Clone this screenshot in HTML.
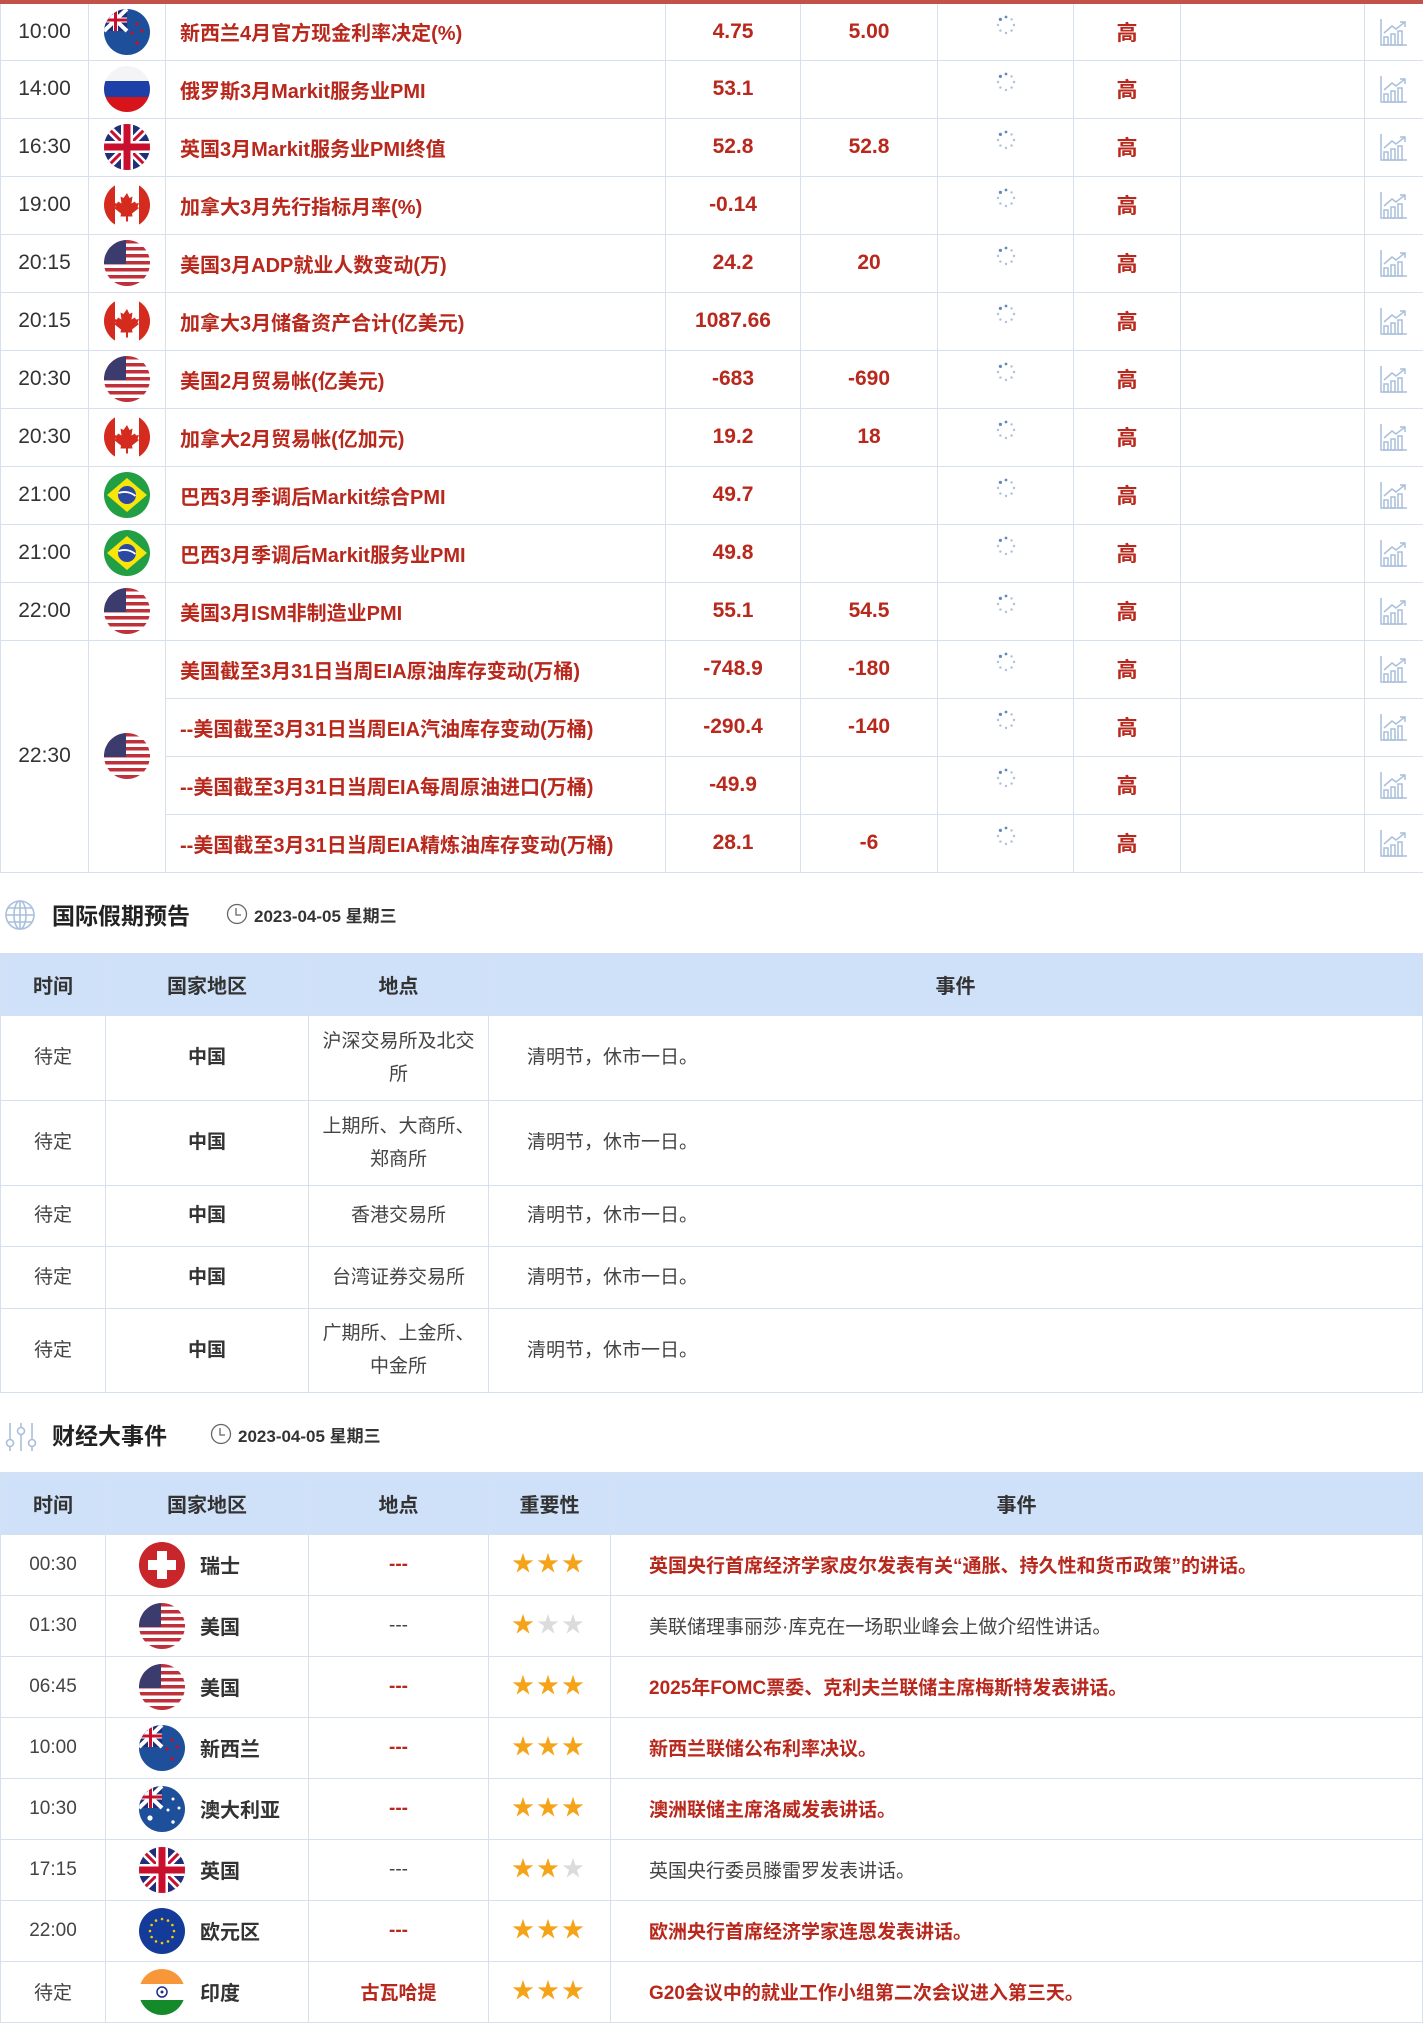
<!DOCTYPE html>
<html><head><meta charset="utf-8">
<style>
*{margin:0;padding:0;box-sizing:border-box}
body{width:1423px;height:2013px;overflow:hidden;background:#fff;font-family:"Liberation Sans","Noto Sans CJK SC",sans-serif;color:#333}
table{border-collapse:collapse;table-layout:fixed;width:1423px}
td,th{border:1px solid #d7e0ee;text-align:center;vertical-align:middle}
#t1{border-top:4px solid #c0524a}
#t1 td{height:58px;font-size:20px}
#t1 td.tm{color:#333;font-size:21px}
#t1 td.ev{text-align:left;padding-left:14px;color:#b8281c;font-weight:bold;font-size:20px}
#t1 td.v{color:#b8281c;font-weight:bold;font-size:21px}
#t1 td.g{color:#b8281c;font-size:21px;font-weight:bold}
.fw{width:46px;height:46px;border-radius:50%;overflow:hidden;display:block;margin:0 auto}
.fw svg{width:46px;height:46px;display:block}
.sec{height:80px;position:relative}
.sec .ti{position:absolute;left:52px;top:24px;font-size:23px;font-weight:bold;color:#222}
.sec .dt{position:absolute;top:29px;font-size:17px;font-weight:bold;color:#333}
th{background:#cfe1f9;font-size:20px;font-weight:bold;color:#333;height:62px}
#t2 td{font-size:19px;color:#444;line-height:33px}
#t2 td.cn{font-weight:bold;color:#333}
#t3 td{height:61px;font-size:19px;color:#444}
#t3 td.red{color:#b8281c;font-weight:bold}
.ctry{display:flex;align-items:center;padding-left:33px}
.ctry .fw{margin:0 15px 0 0}
.ctry b{font-size:20px;color:#333}
#t3 td.st{color:#f5a318;font-size:22px;letter-spacing:3px;padding-bottom:6px}
.st i{color:#dcdcdc;font-style:normal}
.sp{width:20px;height:20px;display:block;margin:-14px auto 0}
</style></head><body>
<svg width="0" height="0" style="position:absolute">
<defs>
<symbol id="us" viewBox="0 0 46 46"><rect width="46" height="46" fill="#fff"/><g fill="#c0303a"><rect y="0" width="46" height="3.5"/><rect y="7" width="46" height="3.5"/><rect y="14" width="46" height="3.5"/><rect y="21" width="46" height="3.5"/><rect y="28" width="46" height="3.5"/><rect y="35" width="46" height="3.5"/><rect y="42" width="46" height="4"/></g><rect width="22" height="24" fill="#3c3b6e"/></symbol>
<symbol id="uk" viewBox="0 0 46 46"><rect width="46" height="46" fill="#1f2f7a"/><path d="M0 0L46 46M46 0L0 46" stroke="#fff" stroke-width="8"/><path d="M0 0L46 46M46 0L0 46" stroke="#c8102e" stroke-width="3"/><path d="M23 0V46M0 23H46" stroke="#fff" stroke-width="12"/><path d="M23 0V46M0 23H46" stroke="#c8102e" stroke-width="7"/></symbol>
<symbol id="nz" viewBox="0 0 46 46"><rect width="46" height="46" fill="#1d4f9a"/><rect width="23" height="22" fill="#1f2f7a"/><path d="M0 0L23 22M23 0L0 22" stroke="#fff" stroke-width="4"/><path d="M11.5 0V22M0 11H23" stroke="#fff" stroke-width="5"/><path d="M11.5 0V22M0 11H23" stroke="#c8102e" stroke-width="3"/><g fill="#c8102e"><circle cx="33" cy="15" r="1.6"/><circle cx="38" cy="22" r="1.6"/><circle cx="28" cy="24" r="1.6"/><circle cx="33" cy="34" r="1.8"/></g></symbol>
<symbol id="au" viewBox="0 0 46 46"><rect width="46" height="46" fill="#1d4f9a"/><rect width="23" height="22" fill="#1f2f7a"/><path d="M0 0L23 22M23 0L0 22" stroke="#fff" stroke-width="4"/><path d="M11.5 0V22M0 11H23" stroke="#fff" stroke-width="5"/><path d="M11.5 0V22M0 11H23" stroke="#c8102e" stroke-width="3"/><g fill="#fff"><circle cx="11" cy="32" r="2.6"/><circle cx="34" cy="13" r="1.5"/><circle cx="40" cy="22" r="1.5"/><circle cx="29" cy="24" r="1.5"/><circle cx="34" cy="36" r="1.7"/></g></symbol>
<symbol id="ru" viewBox="0 0 46 46"><rect width="46" height="16" fill="#f4f4f6"/><rect y="15" width="46" height="16" fill="#1c3fa8"/><rect y="31" width="46" height="15" fill="#d7141a"/></symbol>
<symbol id="ca" viewBox="0 0 46 46"><rect width="46" height="46" fill="#fff"/><rect width="11" height="46" fill="#d52b1e"/><rect x="35" width="11" height="46" fill="#d52b1e"/><path d="M23 11l2.5 5 3-1.5-1 7 3.5-2 1 2 3-.5-1.5 4 1.5 1-7 5.5.5 3H24v5h-2v-5h-5.5l.5-3-7-5.5 1.5-1-1.5-4 3 .5 1-2 3.5 2-1-7 3 1.5z" fill="#d52b1e"/></symbol>
<symbol id="br" viewBox="0 0 46 46"><rect width="46" height="46" fill="#229e45"/><path d="M23 6L43 23 23 40 3 23z" fill="#f8e509"/><circle cx="23" cy="23" r="9" fill="#2b49a3"/><path d="M14.5 21c6-2 12-1 17 3" stroke="#fff" stroke-width="1.8" fill="none"/></symbol>
<symbol id="ch" viewBox="0 0 46 46"><rect width="46" height="46" fill="#c8262a"/><path d="M18 9h10v9h9v10h-9v9H18v-9H9V18h9z" fill="#fff"/></symbol>
<symbol id="eu" viewBox="0 0 46 46"><rect width="46" height="46" fill="#143a9a"/><g fill="#f5d000"><circle cx="23" cy="11" r="1.3"/><circle cx="29" cy="12.6" r="1.3"/><circle cx="33.4" cy="17" r="1.3"/><circle cx="35" cy="23" r="1.3"/><circle cx="33.4" cy="29" r="1.3"/><circle cx="29" cy="33.4" r="1.3"/><circle cx="23" cy="35" r="1.3"/><circle cx="17" cy="33.4" r="1.3"/><circle cx="12.6" cy="29" r="1.3"/><circle cx="11" cy="23" r="1.3"/><circle cx="12.6" cy="17" r="1.3"/><circle cx="17" cy="12.6" r="1.3"/></g></symbol>
<symbol id="in" viewBox="0 0 46 46"><rect width="46" height="16" fill="#f7973a"/><rect y="15" width="46" height="16" fill="#fff"/><rect y="31" width="46" height="15" fill="#148a2a"/><circle cx="23" cy="23" r="5" fill="none" stroke="#1e2d8a" stroke-width="1.5"/><circle cx="23" cy="23" r="1.5" fill="#1e2d8a"/></symbol>
<symbol id="sp" viewBox="0 0 20 20"><g fill="#a9bfdc"><circle cx="10" cy="2" r="1.4" fill="#6688b8"/><circle cx="15.6" cy="4.4" r="1.2"/><circle cx="18" cy="10" r="1.2"/><circle cx="15.6" cy="15.6" r="1.2"/><circle cx="10" cy="18" r="1.2"/><circle cx="4.4" cy="15.6" r="1.2"/><circle cx="2" cy="10" r="1.2"/><circle cx="4.4" cy="4.4" r="1.6" fill="#6688b8"/></g></symbol>
<symbol id="ch2" viewBox="0 0 30 30"><g fill="none" stroke="#a9bfdc" stroke-width="1.5"><path d="M2 2V28H28"/><rect x="5" y="20" width="4" height="8"/><rect x="12" y="17" width="4" height="11"/><rect x="19" y="14" width="4" height="14"/><path d="M5 16L13 9 17 12 26 5M21 5h5v5"/></g></symbol>
</defs></svg>

<table id="t1">
<colgroup><col style="width:88px"><col style="width:77px"><col style="width:500px"><col style="width:135px"><col style="width:137px"><col style="width:136px"><col style="width:107px"><col style="width:184px"><col style="width:59px"></colgroup>
<tr><td class="tm">10:00</td><td><span class="fw"><svg><use href="#nz"/></svg></span></td><td class="ev">新西兰4月官方现金利率决定(%)</td><td class="v">4.75</td><td class="v">5.00</td><td><svg class="sp"><use href="#sp"/></svg></td><td class="g">高</td><td></td><td><svg width="30" height="30" style="display:block;margin:auto"><use href="#ch2"/></svg></td></tr>
<tr><td class="tm">14:00</td><td><span class="fw"><svg><use href="#ru"/></svg></span></td><td class="ev">俄罗斯3月Markit服务业PMI</td><td class="v">53.1</td><td class="v"></td><td><svg class="sp"><use href="#sp"/></svg></td><td class="g">高</td><td></td><td><svg width="30" height="30" style="display:block;margin:auto"><use href="#ch2"/></svg></td></tr>
<tr><td class="tm">16:30</td><td><span class="fw"><svg><use href="#uk"/></svg></span></td><td class="ev">英国3月Markit服务业PMI终值</td><td class="v">52.8</td><td class="v">52.8</td><td><svg class="sp"><use href="#sp"/></svg></td><td class="g">高</td><td></td><td><svg width="30" height="30" style="display:block;margin:auto"><use href="#ch2"/></svg></td></tr>
<tr><td class="tm">19:00</td><td><span class="fw"><svg><use href="#ca"/></svg></span></td><td class="ev">加拿大3月先行指标月率(%)</td><td class="v">-0.14</td><td class="v"></td><td><svg class="sp"><use href="#sp"/></svg></td><td class="g">高</td><td></td><td><svg width="30" height="30" style="display:block;margin:auto"><use href="#ch2"/></svg></td></tr>
<tr><td class="tm">20:15</td><td><span class="fw"><svg><use href="#us"/></svg></span></td><td class="ev">美国3月ADP就业人数变动(万)</td><td class="v">24.2</td><td class="v">20</td><td><svg class="sp"><use href="#sp"/></svg></td><td class="g">高</td><td></td><td><svg width="30" height="30" style="display:block;margin:auto"><use href="#ch2"/></svg></td></tr>
<tr><td class="tm">20:15</td><td><span class="fw"><svg><use href="#ca"/></svg></span></td><td class="ev">加拿大3月储备资产合计(亿美元)</td><td class="v">1087.66</td><td class="v"></td><td><svg class="sp"><use href="#sp"/></svg></td><td class="g">高</td><td></td><td><svg width="30" height="30" style="display:block;margin:auto"><use href="#ch2"/></svg></td></tr>
<tr><td class="tm">20:30</td><td><span class="fw"><svg><use href="#us"/></svg></span></td><td class="ev">美国2月贸易帐(亿美元)</td><td class="v">-683</td><td class="v">-690</td><td><svg class="sp"><use href="#sp"/></svg></td><td class="g">高</td><td></td><td><svg width="30" height="30" style="display:block;margin:auto"><use href="#ch2"/></svg></td></tr>
<tr><td class="tm">20:30</td><td><span class="fw"><svg><use href="#ca"/></svg></span></td><td class="ev">加拿大2月贸易帐(亿加元)</td><td class="v">19.2</td><td class="v">18</td><td><svg class="sp"><use href="#sp"/></svg></td><td class="g">高</td><td></td><td><svg width="30" height="30" style="display:block;margin:auto"><use href="#ch2"/></svg></td></tr>
<tr><td class="tm">21:00</td><td><span class="fw"><svg><use href="#br"/></svg></span></td><td class="ev">巴西3月季调后Markit综合PMI</td><td class="v">49.7</td><td class="v"></td><td><svg class="sp"><use href="#sp"/></svg></td><td class="g">高</td><td></td><td><svg width="30" height="30" style="display:block;margin:auto"><use href="#ch2"/></svg></td></tr>
<tr><td class="tm">21:00</td><td><span class="fw"><svg><use href="#br"/></svg></span></td><td class="ev">巴西3月季调后Markit服务业PMI</td><td class="v">49.8</td><td class="v"></td><td><svg class="sp"><use href="#sp"/></svg></td><td class="g">高</td><td></td><td><svg width="30" height="30" style="display:block;margin:auto"><use href="#ch2"/></svg></td></tr>
<tr><td class="tm">22:00</td><td><span class="fw"><svg><use href="#us"/></svg></span></td><td class="ev">美国3月ISM非制造业PMI</td><td class="v">55.1</td><td class="v">54.5</td><td><svg class="sp"><use href="#sp"/></svg></td><td class="g">高</td><td></td><td><svg width="30" height="30" style="display:block;margin:auto"><use href="#ch2"/></svg></td></tr>
<tr><td class="tm" rowspan="4">22:30</td><td rowspan="4"><span class="fw"><svg><use href="#us"/></svg></span></td><td class="ev">美国截至3月31日当周EIA原油库存变动(万桶)</td><td class="v">-748.9</td><td class="v">-180</td><td><svg class="sp"><use href="#sp"/></svg></td><td class="g">高</td><td></td><td><svg width="30" height="30" style="display:block;margin:auto"><use href="#ch2"/></svg></td></tr>
<tr><td class="ev">--美国截至3月31日当周EIA汽油库存变动(万桶)</td><td class="v">-290.4</td><td class="v">-140</td><td><svg class="sp"><use href="#sp"/></svg></td><td class="g">高</td><td></td><td><svg width="30" height="30" style="display:block;margin:auto"><use href="#ch2"/></svg></td></tr>
<tr><td class="ev">--美国截至3月31日当周EIA每周原油进口(万桶)</td><td class="v">-49.9</td><td class="v"></td><td><svg class="sp"><use href="#sp"/></svg></td><td class="g">高</td><td></td><td><svg width="30" height="30" style="display:block;margin:auto"><use href="#ch2"/></svg></td></tr>
<tr><td class="ev">--美国截至3月31日当周EIA精炼油库存变动(万桶)</td><td class="v">28.1</td><td class="v">-6</td><td><svg class="sp"><use href="#sp"/></svg></td><td class="g">高</td><td></td><td><svg width="30" height="30" style="display:block;margin:auto"><use href="#ch2"/></svg></td></tr>
</table>

<div class="sec">
<svg style="position:absolute;left:4px;top:26px" width="32" height="32" viewBox="0 0 32 32"><g fill="none" stroke="#a9bfdc" stroke-width="1.6"><circle cx="16" cy="16" r="14"/><ellipse cx="16" cy="16" rx="6" ry="14"/><path d="M2 16H30M4 9H28M4 23H28M16 2V30"/></g></svg>
<div class="ti">国际假期预告</div>
<svg style="position:absolute;left:226px;top:30px" width="22" height="22" viewBox="0 0 22 22"><circle cx="11" cy="11" r="9.5" fill="none" stroke="#666" stroke-width="1.3"/><path d="M10 5V12H15" fill="none" stroke="#666" stroke-width="1.3"/></svg>
<div class="dt" style="left:254px">2023-04-05 星期三</div>
</div>
<table id="t2">
<colgroup><col style="width:105px"><col style="width:203px"><col style="width:180px"><col></colgroup>
<tr><th>时间</th><th>国家地区</th><th>地点</th><th>事件</th></tr>
<tr style="height:85px"><td>待定</td><td class="cn">中国</td><td>沪深交易所及北交<br>所</td><td style="text-align:left;padding-left:38px">清明节，休市一日。</td></tr>
<tr style="height:85px"><td>待定</td><td class="cn">中国</td><td>上期所、大商所、<br>郑商所</td><td style="text-align:left;padding-left:38px">清明节，休市一日。</td></tr>
<tr style="height:61px"><td>待定</td><td class="cn">中国</td><td>香港交易所</td><td style="text-align:left;padding-left:38px">清明节，休市一日。</td></tr>
<tr style="height:62px"><td>待定</td><td class="cn">中国</td><td>台湾证券交易所</td><td style="text-align:left;padding-left:38px">清明节，休市一日。</td></tr>
<tr style="height:84px"><td>待定</td><td class="cn">中国</td><td>广期所、上金所、<br>中金所</td><td style="text-align:left;padding-left:38px">清明节，休市一日。</td></tr>
</table>

<div class="sec" style="height:79px">
<svg style="position:absolute;left:4px;top:28px" width="36" height="30" viewBox="0 0 36 30"><g fill="none" stroke="#a9bfdc" stroke-width="1.6"><path d="M6 2V30M17 2V30M28 2V30"/><circle cx="6" cy="22" r="3.5" fill="#fff"/><circle cx="17" cy="10" r="3.5" fill="#fff"/><circle cx="28" cy="22" r="3.5" fill="#fff"/></g></svg>
<div class="ti">财经大事件</div>
<svg style="position:absolute;left:210px;top:30px" width="22" height="22" viewBox="0 0 22 22"><circle cx="11" cy="11" r="9.5" fill="none" stroke="#666" stroke-width="1.3"/><path d="M10 5V12H15" fill="none" stroke="#666" stroke-width="1.3"/></svg>
<div class="dt" style="left:238px">2023-04-05 星期三</div>
</div>
<table id="t3">
<colgroup><col style="width:105px"><col style="width:203px"><col style="width:180px"><col style="width:122px"><col></colgroup>
<tr><th>时间</th><th>国家地区</th><th>地点</th><th>重要性</th><th>事件</th></tr>
<tr><td>00:30</td><td><div class="ctry"><span class="fw"><svg><use href="#ch"/></svg></span><b>瑞士</b></div></td><td class="red">---</td><td class="st">★★★</td><td class="red" style="text-align:left;padding-left:38px">英国央行首席经济学家皮尔发表有关“通胀、持久性和货币政策”的讲话。</td></tr>
<tr><td>01:30</td><td><div class="ctry"><span class="fw"><svg><use href="#us"/></svg></span><b>美国</b></div></td><td>---</td><td class="st">★<i>★★</i></td><td style="text-align:left;padding-left:38px">美联储理事丽莎·库克在一场职业峰会上做介绍性讲话。</td></tr>
<tr><td>06:45</td><td><div class="ctry"><span class="fw"><svg><use href="#us"/></svg></span><b>美国</b></div></td><td class="red">---</td><td class="st">★★★</td><td class="red" style="text-align:left;padding-left:38px">2025年FOMC票委、克利夫兰联储主席梅斯特发表讲话。</td></tr>
<tr><td>10:00</td><td><div class="ctry"><span class="fw"><svg><use href="#nz"/></svg></span><b>新西兰</b></div></td><td class="red">---</td><td class="st">★★★</td><td class="red" style="text-align:left;padding-left:38px">新西兰联储公布利率决议。</td></tr>
<tr><td>10:30</td><td><div class="ctry"><span class="fw"><svg><use href="#au"/></svg></span><b>澳大利亚</b></div></td><td class="red">---</td><td class="st">★★★</td><td class="red" style="text-align:left;padding-left:38px">澳洲联储主席洛威发表讲话。</td></tr>
<tr><td>17:15</td><td><div class="ctry"><span class="fw"><svg><use href="#uk"/></svg></span><b>英国</b></div></td><td>---</td><td class="st">★★<i>★</i></td><td style="text-align:left;padding-left:38px">英国央行委员滕雷罗发表讲话。</td></tr>
<tr><td>22:00</td><td><div class="ctry"><span class="fw"><svg><use href="#eu"/></svg></span><b>欧元区</b></div></td><td class="red">---</td><td class="st">★★★</td><td class="red" style="text-align:left;padding-left:38px">欧洲央行首席经济学家连恩发表讲话。</td></tr>
<tr><td>待定</td><td><div class="ctry"><span class="fw"><svg><use href="#in"/></svg></span><b>印度</b></div></td><td class="red">古瓦哈提</td><td class="st">★★★</td><td class="red" style="text-align:left;padding-left:38px">G20会议中的就业工作小组第二次会议进入第三天。</td></tr>
</table>
</body></html>
